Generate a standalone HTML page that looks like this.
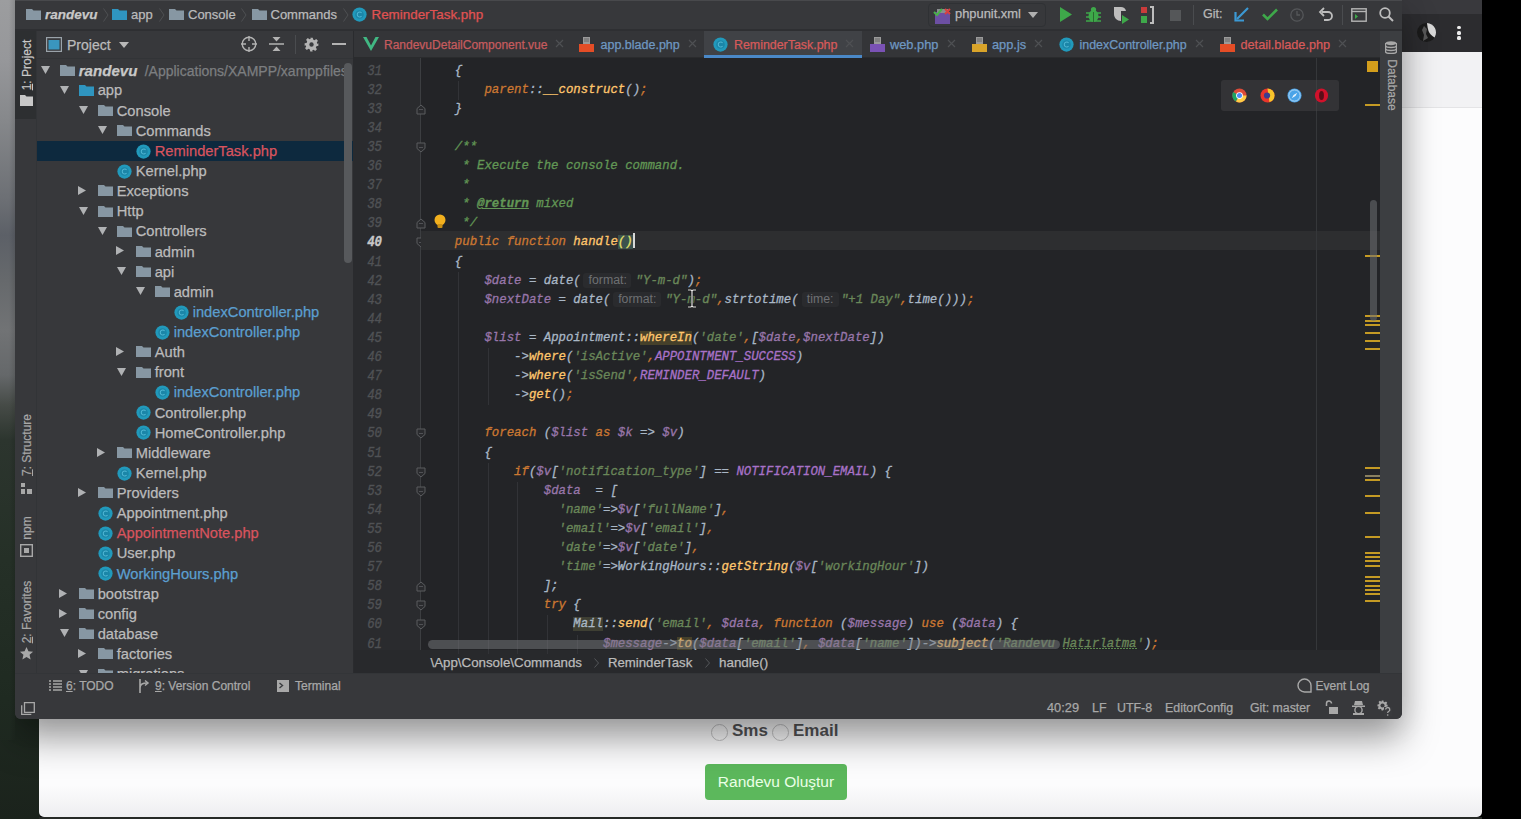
<!DOCTYPE html><html><head><meta charset="utf-8"><style>
*{margin:0;padding:0;box-sizing:border-box}
html,body{width:1521px;height:819px;overflow:hidden;background:#000;font-family:"Liberation Sans",sans-serif}
.a{position:absolute}
.ui{font-family:"Liberation Sans",sans-serif;white-space:pre;line-height:1;-webkit-text-stroke:0.25px currentColor}
.code{font-family:"Liberation Mono",monospace;font-style:italic;font-size:12.35px;white-space:pre;line-height:19.05px;color:#a9b7c6;-webkit-text-stroke:0.3px currentColor}
.kw{color:#cc7832}.fn{color:#ffc66d}.v{color:#9876aa}.cn{color:#a872c8}.s{color:#6a8759}.c{color:#629755}.t{color:#a9b7c6}
.k{color:#cc7832}
.hint{display:inline-block;box-sizing:border-box;font-family:"Liberation Sans",sans-serif;font-style:normal;font-size:12.3px;line-height:15px;color:#6e7073;background:#2a2b2e;border-radius:3px;vertical-align:0px;-webkit-text-stroke:0}
</style></head><body>
<div class="a" style="left:0;top:0;width:40px;height:819px;background:linear-gradient(180deg,#9c9d9f 0px,#96979a 60px,#86888b 120px,#6c6f74 200px,#5c6067 235px,#66696c 280px,#717375 330px,#65686a 375px,#464b47 405px,#2c352e 440px,#253027 560px,#1f2a21 700px,#1b231c 819px)"></div>
<div class="a" style="left:1482px;top:0;width:39px;height:819px;background:#000"></div>
<div class="a" style="left:39px;top:0;width:1443px;height:817px;background:linear-gradient(180deg,#fcfcfd 0,#fcfcfd 785px,#eeeef0 817px);border-radius:0 0 5px 5px"></div>
<div class="a" style="left:39px;top:0;width:1443px;height:14px;background:#39393d"></div>
<div class="a" style="left:39px;top:14px;width:1443px;height:38px;background:#2c2c2f"></div>
<div class="a" style="left:39px;top:52px;width:1443px;height:55px;background:#f2f2f4"></div>
<div class="a" style="left:39px;top:107px;width:1443px;height:1px;background:#e4e4e6"></div>
<svg class="a" style="left:1416.5px;top:23px" width="19" height="19" viewBox="0 0 19 19"><circle cx="9.5" cy="9.5" r="9.5" fill="#1b1b1b"/><path d="M10 0.05A9.5 9.5 0 0 1 17.6 14.5C15 13 12.5 11 11.5 8 10.8 5.5 10.3 3 10 0.05z" fill="#d8d8d8"/><path d="M7 3l3 3-1 5 2 4-5 3 1-6-2-5z" fill="#8a8a8a" opacity=".55"/></svg>
<div class="a" style="left:1457px;top:25.8px;width:3.6px;height:3.6px;border-radius:1.5px;background:#ececec"></div>
<div class="a" style="left:1457px;top:31.1px;width:3.6px;height:3.6px;border-radius:1.5px;background:#ececec"></div>
<div class="a" style="left:1457px;top:36.4px;width:3.6px;height:3.6px;border-radius:1.5px;background:#ececec"></div>
<div class="a" style="left:711px;top:724px;width:17px;height:17px;border-radius:50%;border:1.5px solid #c4c4c6"></div>
<div class="a ui" style="left:732px;top:722px;font-size:17px;font-weight:bold;color:#555557;-webkit-text-stroke:0">Sms</div>
<div class="a" style="left:772px;top:724px;width:17px;height:17px;border-radius:50%;border:1.5px solid #c4c4c6"></div>
<div class="a ui" style="left:793px;top:722px;font-size:17px;font-weight:bold;color:#555557;-webkit-text-stroke:0">Email</div>
<div class="a" style="left:705px;top:764px;width:142px;height:36px;border-radius:4px;background:#5cb85c"></div>
<div class="a ui" style="left:705px;top:774px;width:142px;text-align:center;font-size:15.5px;color:#eaffe6;-webkit-text-stroke:0">Randevu Oluştur</div>
<div class="a" style="left:39px;top:817px;width:1443px;height:2px;background:#262a26"></div>
<div class="a" style="left:15px;top:0;width:1387px;height:719px;background:#3a3c3f;border-radius:0 0 6px 6px;overflow:hidden;box-shadow:0 20px 36px rgba(0,0,0,.36),0 4px 30px rgba(0,0,0,.1)" id="ide">
</div>
<div class="a" style="left:0;top:0;width:15px;height:740px;background:linear-gradient(180deg,#9c9d9f 0px,#96979a 60px,#86888b 120px,#6c6f74 200px,#5c6067 235px,#66696c 280px,#717375 330px,#65686a 375px,#464b47 405px,#2c352e 440px,#253027 560px,#1f2a21 700px,#1b231c 819px)"></div>
<div class="a" style="left:9px;top:0;width:6px;height:740px;background:linear-gradient(90deg,rgba(0,0,0,0),rgba(0,0,0,.12))"></div>
<div class="a" style="left:15px;top:0;width:1387px;height:30px;background:#37383b"></div>
<div class="a" style="left:15px;top:0;width:1387px;height:1px;background:#48494c"></div>
<div class="a" style="left:15px;top:29px;width:1387px;height:2px;background:#2e2f32"></div>
<div class="a" style="left:15px;top:31px;width:22px;height:688px;background:#37383b;border-radius:0 0 0 6px"></div>
<div class="a" style="left:15px;top:31px;width:22px;height:88px;background:#2d2f31"></div>
<div class="a" style="left:37px;top:31px;width:317px;height:642px;background:#37383b"></div>
<div class="a" style="left:37px;top:58px;width:317px;height:1px;background:#323437"></div>
<div class="a" style="left:353px;top:31px;width:1px;height:642px;background:#2a2b2e"></div>
<div class="a" style="left:354px;top:31px;width:1026px;height:27px;background:#343538"></div>
<div class="a" style="left:354px;top:57px;width:1026px;height:1px;background:#2a2b2d"></div>
<div class="a" style="left:354px;top:58px;width:67px;height:592px;background:#2a2b2e"></div>
<div class="a" style="left:421px;top:58px;width:959px;height:592px;background:#232427"></div>
<div class="a" style="left:354px;top:650px;width:1026px;height:24px;background:#28292c"></div>
<div class="a" style="left:1380px;top:31px;width:22px;height:642px;background:#3c3e41"></div>
<div class="a" style="left:37px;top:673px;width:1365px;height:46px;background:#37383b;border-radius:0 0 6px 0"></div>
<svg class="a" style="left:26px;top:8px" width="15" height="12" viewBox="0 0 15 12"><path d="M0 1h6l1.5 1.6H15V12H0z" fill="#8797a3"/></svg>
<div class="a ui" style="left:45px;top:8px;font-size:13.5px;color:#c8c8c8;font-weight:bold;font-style:italic">randevu</div>
<svg class="a" style="left:103px;top:8px" width="6" height="14" viewBox="0 0 6 14"><path d="M0.5 0.5L5 7 0.5 13.5" stroke="#4e5053" stroke-width="1" fill="none"/></svg>
<svg class="a" style="left:112px;top:8px" width="15" height="12" viewBox="0 0 15 12"><path d="M0 1h6l1.5 1.6H15V12H0z" fill="#2f95c0"/></svg>
<div class="a ui" style="left:131px;top:8px;font-size:13px;color:#bbbbbb;">app</div>
<svg class="a" style="left:159px;top:8px" width="6" height="14" viewBox="0 0 6 14"><path d="M0.5 0.5L5 7 0.5 13.5" stroke="#4e5053" stroke-width="1" fill="none"/></svg>
<svg class="a" style="left:169px;top:8px" width="15" height="12" viewBox="0 0 15 12"><path d="M0 1h6l1.5 1.6H15V12H0z" fill="#8797a3"/></svg>
<div class="a ui" style="left:188px;top:8px;font-size:13px;color:#bbbbbb;">Console</div>
<svg class="a" style="left:241px;top:8px" width="6" height="14" viewBox="0 0 6 14"><path d="M0.5 0.5L5 7 0.5 13.5" stroke="#4e5053" stroke-width="1" fill="none"/></svg>
<svg class="a" style="left:252px;top:8px" width="15" height="12" viewBox="0 0 15 12"><path d="M0 1h6l1.5 1.6H15V12H0z" fill="#8797a3"/></svg>
<div class="a ui" style="left:270.5px;top:8px;font-size:13px;color:#bbbbbb;">Commands</div>
<svg class="a" style="left:343px;top:8px" width="6" height="14" viewBox="0 0 6 14"><path d="M0.5 0.5L5 7 0.5 13.5" stroke="#4e5053" stroke-width="1" fill="none"/></svg>
<svg class="a" style="left:352px;top:7px" width="15" height="15" viewBox="0 0 16 16"><circle cx="8" cy="8" r="7.6" fill="#2199bb"/><circle cx="8" cy="8" r="4.6" fill="#1b86a8"/><path d="M10.2 6.3A2.6 2.6 0 1 0 10.2 9.7" stroke="#4fb6d3" stroke-width="1.1" fill="none"/></svg>
<div class="a ui" style="left:371.5px;top:8px;font-size:13.4px;color:#e05252;">ReminderTask.php</div>
<div class="a ui" style="left:26.5px;top:64.5px;font-size:12px;color:#c8c8c8;transform:translate(-50%,-50%) rotate(-90deg);-webkit-text-stroke:0.2px #c8c8c8"><u>1</u>: Project</div>
<svg class="a" style="left:20px;top:95px" width="13" height="11" viewBox="0 0 13 11"><path d="M0 0h5l1.5 1.5H13V11H0z" fill="#c8c8c8"/></svg>
<div class="a ui" style="left:27px;top:445px;font-size:12px;color:#a8a8a8;transform:translate(-50%,-50%) rotate(-90deg);-webkit-text-stroke:0.2px #a8a8a8"><u>7</u>: Structure</div>
<svg class="a" style="left:21px;top:483px" width="11" height="11" viewBox="0 0 11 11"><rect x="0" y="0" width="4" height="4" fill="#a8a8a8"/><rect x="0" y="6" width="4" height="5" fill="#a8a8a8"/><rect x="6" y="6" width="5" height="5" fill="#a8a8a8"/></svg>
<div class="a ui" style="left:27px;top:527.5px;font-size:12px;color:#a8a8a8;transform:translate(-50%,-50%) rotate(-90deg);-webkit-text-stroke:0.2px #a8a8a8">npm</div>
<svg class="a" style="left:20px;top:544px" width="13" height="13" viewBox="0 0 13 13"><rect x="0.7" y="0.7" width="11.6" height="11.6" fill="none" stroke="#a8a8a8" stroke-width="1.4"/><rect x="4" y="4" width="5" height="5" fill="#a8a8a8"/></svg>
<div class="a ui" style="left:27px;top:612px;font-size:12px;color:#a8a8a8;transform:translate(-50%,-50%) rotate(-90deg);-webkit-text-stroke:0.2px #a8a8a8"><u>2</u>: Favorites</div>
<svg class="a" style="left:19px;top:646px" width="15" height="15" viewBox="0 0 24 24"><path d="M12 1.5l3.1 7 7.4.7-5.6 4.9 1.7 7.4L12 17.6 5.4 21.5l1.7-7.4L1.5 9.2l7.4-.7z" fill="#a8a8a8"/></svg>
<div class="a" style="left:36px;top:31px;width:1px;height:642px;background:#323437"></div>
<div class="a" style="left:15px;top:673px;width:1387px;height:1px;background:#333538"></div>
<svg class="a" style="left:21px;top:702px" width="14" height="13" viewBox="0 0 14 13"><path d="M3.5 0.7h9.8v9.6H3.5z M0.7 3.2v9.1h9.6" fill="none" stroke="#a8a8a8" stroke-width="1.3"/></svg>
<svg class="a" style="left:46px;top:37px" width="16" height="15" viewBox="0 0 16 15"><rect x="0.6" y="0.6" width="14.8" height="13.8" fill="none" stroke="#9aa3aa" stroke-width="1.2"/><rect x="2.5" y="3" width="11" height="9.5" fill="#3a96bf"/></svg>
<div class="a ui" style="left:67px;top:38px;font-size:14px;color:#bbbbbb;">Project</div>
<svg class="a" style="left:119px;top:42px" width="10" height="6" viewBox="0 0 10 6"><path d="M0 0h10L5 6z" fill="#b8b8b8"/></svg>
<svg class="a" style="left:241px;top:36px" width="16" height="16" viewBox="0 0 16 16"><circle cx="8" cy="8" r="6.8" fill="none" stroke="#b3b3b3" stroke-width="1.4"/><path d="M8 0v5M8 11v5M0 8h5M11 8h5" stroke="#b3b3b3" stroke-width="1.4"/></svg>
<svg class="a" style="left:269px;top:36px" width="15" height="16" viewBox="0 0 15 16"><path d="M0 8h15" stroke="#b3b3b3" stroke-width="1.5"/><path d="M3.5 1h8L7.5 5.5zM3.5 15h8L7.5 10.5z" fill="#b3b3b3"/></svg>
<div class="a" style="left:295px;top:35px;width:1px;height:19px;background:#4a4c4f"></div>
<svg class="a" style="left:304px;top:37px" width="15" height="15" viewBox="0 0 24 24"><path d="M10 1h4l.6 3.1 2.3 1 2.6-1.8 2.8 2.8-1.8 2.6 1 2.3L23 10v4l-3.1.6-1 2.3 1.8 2.6-2.8 2.8-2.6-1.8-2.3 1L14 23h-4l-.6-3.1-2.3-1-2.6 1.8-2.8-2.8 1.8-2.6-1-2.3L1 14v-4l3.1-.6 1-2.3L3.3 4.5l2.8-2.8 2.6 1.8 2.3-1z" fill="#b3b3b3"/><circle cx="12" cy="12" r="3.5" fill="#3a3c3f"/></svg>
<div class="a" style="left:332px;top:43px;width:14px;height:2px;background:#b3b3b3"></div>
<div class="a" style="left:37px;top:59px;width:316px;height:614px;overflow:hidden">
<div class="a" style="left:-37px;top:-59px;width:400px;height:800px">
<div class="a" style="left:37px;top:141px;width:316px;height:20px;background:#0d293e"></div>
<svg class="a" style="left:41.2px;top:65.6px" width="9" height="8" viewBox="0 0 9 8"><path d="M0 0h9L4.5 8z" fill="#b0b2b4"/></svg>
<svg class="a" style="left:59.7px;top:63.6px" width="15" height="12" viewBox="0 0 15 12"><path d="M0 1h6l1.5 1.6H15V12H0z" fill="#8797a3"/></svg>
<div class="a ui" style="left:78.7px;top:63.1px;font-size:15.1px;color:#c8c8c8;font-weight:bold;font-style:italic">randevu</div>
<div class="a ui" style="left:144.7px;top:63.6px;font-size:14px;color:#7c7e80;">/Applications/XAMPP/xamppfiles</div>
<svg class="a" style="left:60.2px;top:85.7px" width="9" height="8" viewBox="0 0 9 8"><path d="M0 0h9L4.5 8z" fill="#b0b2b4"/></svg>
<svg class="a" style="left:78.7px;top:83.7px" width="15" height="12" viewBox="0 0 15 12"><path d="M0 1h6l1.5 1.6H15V12H0z" fill="#2f95c0"/></svg>
<div class="a ui" style="left:97.7px;top:83.4px;font-size:14.7px;color:#bbbbbb;">app</div>
<svg class="a" style="left:79.2px;top:105.9px" width="9" height="8" viewBox="0 0 9 8"><path d="M0 0h9L4.5 8z" fill="#b0b2b4"/></svg>
<svg class="a" style="left:97.7px;top:103.9px" width="15" height="12" viewBox="0 0 15 12"><path d="M0 1h6l1.5 1.6H15V12H0z" fill="#8797a3"/></svg>
<div class="a ui" style="left:116.7px;top:103.6px;font-size:14.7px;color:#bbbbbb;">Console</div>
<svg class="a" style="left:98.2px;top:126.0px" width="9" height="8" viewBox="0 0 9 8"><path d="M0 0h9L4.5 8z" fill="#b0b2b4"/></svg>
<svg class="a" style="left:116.7px;top:124.0px" width="15" height="12" viewBox="0 0 15 12"><path d="M0 1h6l1.5 1.6H15V12H0z" fill="#8797a3"/></svg>
<div class="a ui" style="left:135.7px;top:123.7px;font-size:14.7px;color:#bbbbbb;">Commands</div>
<svg class="a" style="left:135.7px;top:143.6px" width="15" height="15" viewBox="0 0 16 16"><circle cx="8" cy="8" r="7.6" fill="#2199bb"/><circle cx="8" cy="8" r="4.6" fill="#1b86a8"/><path d="M10.2 6.3A2.6 2.6 0 1 0 10.2 9.7" stroke="#4fb6d3" stroke-width="1.1" fill="none"/></svg>
<div class="a ui" style="left:154.7px;top:143.8px;font-size:14.7px;color:#d8545e;">ReminderTask.php</div>
<svg class="a" style="left:116.7px;top:163.8px" width="15" height="15" viewBox="0 0 16 16"><circle cx="8" cy="8" r="7.6" fill="#2199bb"/><circle cx="8" cy="8" r="4.6" fill="#1b86a8"/><path d="M10.2 6.3A2.6 2.6 0 1 0 10.2 9.7" stroke="#4fb6d3" stroke-width="1.1" fill="none"/></svg>
<div class="a ui" style="left:135.7px;top:163.9px;font-size:14.7px;color:#bbbbbb;">Kernel.php</div>
<svg class="a" style="left:78.2px;top:185.9px" width="8" height="9" viewBox="0 0 8 9"><path d="M0 0v9l8-4.5z" fill="#b0b2b4"/></svg>
<svg class="a" style="left:97.7px;top:184.4px" width="15" height="12" viewBox="0 0 15 12"><path d="M0 1h6l1.5 1.6H15V12H0z" fill="#8797a3"/></svg>
<div class="a ui" style="left:116.7px;top:184.1px;font-size:14.7px;color:#bbbbbb;">Exceptions</div>
<svg class="a" style="left:79.2px;top:206.5px" width="9" height="8" viewBox="0 0 9 8"><path d="M0 0h9L4.5 8z" fill="#b0b2b4"/></svg>
<svg class="a" style="left:97.7px;top:204.5px" width="15" height="12" viewBox="0 0 15 12"><path d="M0 1h6l1.5 1.6H15V12H0z" fill="#8797a3"/></svg>
<div class="a ui" style="left:116.7px;top:204.2px;font-size:14.7px;color:#bbbbbb;">Http</div>
<svg class="a" style="left:98.2px;top:226.6px" width="9" height="8" viewBox="0 0 9 8"><path d="M0 0h9L4.5 8z" fill="#b0b2b4"/></svg>
<svg class="a" style="left:116.7px;top:224.6px" width="15" height="12" viewBox="0 0 15 12"><path d="M0 1h6l1.5 1.6H15V12H0z" fill="#8797a3"/></svg>
<div class="a ui" style="left:135.7px;top:224.3px;font-size:14.7px;color:#bbbbbb;">Controllers</div>
<svg class="a" style="left:116.2px;top:246.3px" width="8" height="9" viewBox="0 0 8 9"><path d="M0 0v9l8-4.5z" fill="#b0b2b4"/></svg>
<svg class="a" style="left:135.7px;top:244.8px" width="15" height="12" viewBox="0 0 15 12"><path d="M0 1h6l1.5 1.6H15V12H0z" fill="#8797a3"/></svg>
<div class="a ui" style="left:154.7px;top:244.5px;font-size:14.7px;color:#bbbbbb;">admin</div>
<svg class="a" style="left:117.2px;top:266.9px" width="9" height="8" viewBox="0 0 9 8"><path d="M0 0h9L4.5 8z" fill="#b0b2b4"/></svg>
<svg class="a" style="left:135.7px;top:264.9px" width="15" height="12" viewBox="0 0 15 12"><path d="M0 1h6l1.5 1.6H15V12H0z" fill="#8797a3"/></svg>
<div class="a ui" style="left:154.7px;top:264.6px;font-size:14.7px;color:#bbbbbb;">api</div>
<svg class="a" style="left:136.2px;top:287.0px" width="9" height="8" viewBox="0 0 9 8"><path d="M0 0h9L4.5 8z" fill="#b0b2b4"/></svg>
<svg class="a" style="left:154.7px;top:285.0px" width="15" height="12" viewBox="0 0 15 12"><path d="M0 1h6l1.5 1.6H15V12H0z" fill="#8797a3"/></svg>
<div class="a ui" style="left:173.7px;top:284.7px;font-size:14.7px;color:#bbbbbb;">admin</div>
<svg class="a" style="left:173.7px;top:304.7px" width="15" height="15" viewBox="0 0 16 16"><circle cx="8" cy="8" r="7.6" fill="#2199bb"/><circle cx="8" cy="8" r="4.6" fill="#1b86a8"/><path d="M10.2 6.3A2.6 2.6 0 1 0 10.2 9.7" stroke="#4fb6d3" stroke-width="1.1" fill="none"/></svg>
<div class="a ui" style="left:192.7px;top:304.9px;font-size:14.7px;color:#5b9fd0;">indexController.php</div>
<svg class="a" style="left:154.7px;top:324.8px" width="15" height="15" viewBox="0 0 16 16"><circle cx="8" cy="8" r="7.6" fill="#2199bb"/><circle cx="8" cy="8" r="4.6" fill="#1b86a8"/><path d="M10.2 6.3A2.6 2.6 0 1 0 10.2 9.7" stroke="#4fb6d3" stroke-width="1.1" fill="none"/></svg>
<div class="a ui" style="left:173.7px;top:325.0px;font-size:14.7px;color:#5b9fd0;">indexController.php</div>
<svg class="a" style="left:116.2px;top:346.9px" width="8" height="9" viewBox="0 0 8 9"><path d="M0 0v9l8-4.5z" fill="#b0b2b4"/></svg>
<svg class="a" style="left:135.7px;top:345.4px" width="15" height="12" viewBox="0 0 15 12"><path d="M0 1h6l1.5 1.6H15V12H0z" fill="#8797a3"/></svg>
<div class="a ui" style="left:154.7px;top:345.1px;font-size:14.7px;color:#bbbbbb;">Auth</div>
<svg class="a" style="left:117.2px;top:367.5px" width="9" height="8" viewBox="0 0 9 8"><path d="M0 0h9L4.5 8z" fill="#b0b2b4"/></svg>
<svg class="a" style="left:135.7px;top:365.5px" width="15" height="12" viewBox="0 0 15 12"><path d="M0 1h6l1.5 1.6H15V12H0z" fill="#8797a3"/></svg>
<div class="a ui" style="left:154.7px;top:365.2px;font-size:14.7px;color:#bbbbbb;">front</div>
<svg class="a" style="left:154.7px;top:385.2px" width="15" height="15" viewBox="0 0 16 16"><circle cx="8" cy="8" r="7.6" fill="#2199bb"/><circle cx="8" cy="8" r="4.6" fill="#1b86a8"/><path d="M10.2 6.3A2.6 2.6 0 1 0 10.2 9.7" stroke="#4fb6d3" stroke-width="1.1" fill="none"/></svg>
<div class="a ui" style="left:173.7px;top:385.4px;font-size:14.7px;color:#5b9fd0;">indexController.php</div>
<svg class="a" style="left:135.7px;top:405.3px" width="15" height="15" viewBox="0 0 16 16"><circle cx="8" cy="8" r="7.6" fill="#2199bb"/><circle cx="8" cy="8" r="4.6" fill="#1b86a8"/><path d="M10.2 6.3A2.6 2.6 0 1 0 10.2 9.7" stroke="#4fb6d3" stroke-width="1.1" fill="none"/></svg>
<div class="a ui" style="left:154.7px;top:405.5px;font-size:14.7px;color:#bbbbbb;">Controller.php</div>
<svg class="a" style="left:135.7px;top:425.4px" width="15" height="15" viewBox="0 0 16 16"><circle cx="8" cy="8" r="7.6" fill="#2199bb"/><circle cx="8" cy="8" r="4.6" fill="#1b86a8"/><path d="M10.2 6.3A2.6 2.6 0 1 0 10.2 9.7" stroke="#4fb6d3" stroke-width="1.1" fill="none"/></svg>
<div class="a ui" style="left:154.7px;top:425.6px;font-size:14.7px;color:#bbbbbb;">HomeController.php</div>
<svg class="a" style="left:97.2px;top:447.6px" width="8" height="9" viewBox="0 0 8 9"><path d="M0 0v9l8-4.5z" fill="#b0b2b4"/></svg>
<svg class="a" style="left:116.7px;top:446.1px" width="15" height="12" viewBox="0 0 15 12"><path d="M0 1h6l1.5 1.6H15V12H0z" fill="#8797a3"/></svg>
<div class="a ui" style="left:135.7px;top:445.8px;font-size:14.7px;color:#bbbbbb;">Middleware</div>
<svg class="a" style="left:116.7px;top:465.7px" width="15" height="15" viewBox="0 0 16 16"><circle cx="8" cy="8" r="7.6" fill="#2199bb"/><circle cx="8" cy="8" r="4.6" fill="#1b86a8"/><path d="M10.2 6.3A2.6 2.6 0 1 0 10.2 9.7" stroke="#4fb6d3" stroke-width="1.1" fill="none"/></svg>
<div class="a ui" style="left:135.7px;top:465.9px;font-size:14.7px;color:#bbbbbb;">Kernel.php</div>
<svg class="a" style="left:78.2px;top:487.8px" width="8" height="9" viewBox="0 0 8 9"><path d="M0 0v9l8-4.5z" fill="#b0b2b4"/></svg>
<svg class="a" style="left:97.7px;top:486.3px" width="15" height="12" viewBox="0 0 15 12"><path d="M0 1h6l1.5 1.6H15V12H0z" fill="#8797a3"/></svg>
<div class="a ui" style="left:116.7px;top:486.0px;font-size:14.7px;color:#bbbbbb;">Providers</div>
<svg class="a" style="left:97.7px;top:506.0px" width="15" height="15" viewBox="0 0 16 16"><circle cx="8" cy="8" r="7.6" fill="#2199bb"/><circle cx="8" cy="8" r="4.6" fill="#1b86a8"/><path d="M10.2 6.3A2.6 2.6 0 1 0 10.2 9.7" stroke="#4fb6d3" stroke-width="1.1" fill="none"/></svg>
<div class="a ui" style="left:116.7px;top:506.2px;font-size:14.7px;color:#bbbbbb;">Appointment.php</div>
<svg class="a" style="left:97.7px;top:526.1px" width="15" height="15" viewBox="0 0 16 16"><circle cx="8" cy="8" r="7.6" fill="#2199bb"/><circle cx="8" cy="8" r="4.6" fill="#1b86a8"/><path d="M10.2 6.3A2.6 2.6 0 1 0 10.2 9.7" stroke="#4fb6d3" stroke-width="1.1" fill="none"/></svg>
<div class="a ui" style="left:116.7px;top:526.3px;font-size:14.7px;color:#d8545e;">AppointmentNote.php</div>
<svg class="a" style="left:97.7px;top:546.2px" width="15" height="15" viewBox="0 0 16 16"><circle cx="8" cy="8" r="7.6" fill="#2199bb"/><circle cx="8" cy="8" r="4.6" fill="#1b86a8"/><path d="M10.2 6.3A2.6 2.6 0 1 0 10.2 9.7" stroke="#4fb6d3" stroke-width="1.1" fill="none"/></svg>
<div class="a ui" style="left:116.7px;top:546.4px;font-size:14.7px;color:#bbbbbb;">User.php</div>
<svg class="a" style="left:97.7px;top:566.4px" width="15" height="15" viewBox="0 0 16 16"><circle cx="8" cy="8" r="7.6" fill="#2199bb"/><circle cx="8" cy="8" r="4.6" fill="#1b86a8"/><path d="M10.2 6.3A2.6 2.6 0 1 0 10.2 9.7" stroke="#4fb6d3" stroke-width="1.1" fill="none"/></svg>
<div class="a ui" style="left:116.7px;top:566.6px;font-size:14.7px;color:#5b9fd0;">WorkingHours.php</div>
<svg class="a" style="left:59.2px;top:588.5px" width="8" height="9" viewBox="0 0 8 9"><path d="M0 0v9l8-4.5z" fill="#b0b2b4"/></svg>
<svg class="a" style="left:78.7px;top:587.0px" width="15" height="12" viewBox="0 0 15 12"><path d="M0 1h6l1.5 1.6H15V12H0z" fill="#8797a3"/></svg>
<div class="a ui" style="left:97.7px;top:586.7px;font-size:14.7px;color:#bbbbbb;">bootstrap</div>
<svg class="a" style="left:59.2px;top:608.6px" width="8" height="9" viewBox="0 0 8 9"><path d="M0 0v9l8-4.5z" fill="#b0b2b4"/></svg>
<svg class="a" style="left:78.7px;top:607.1px" width="15" height="12" viewBox="0 0 15 12"><path d="M0 1h6l1.5 1.6H15V12H0z" fill="#8797a3"/></svg>
<div class="a ui" style="left:97.7px;top:606.8px;font-size:14.7px;color:#bbbbbb;">config</div>
<svg class="a" style="left:60.2px;top:629.2px" width="9" height="8" viewBox="0 0 9 8"><path d="M0 0h9L4.5 8z" fill="#b0b2b4"/></svg>
<svg class="a" style="left:78.7px;top:627.2px" width="15" height="12" viewBox="0 0 15 12"><path d="M0 1h6l1.5 1.6H15V12H0z" fill="#8797a3"/></svg>
<div class="a ui" style="left:97.7px;top:626.9px;font-size:14.7px;color:#bbbbbb;">database</div>
<svg class="a" style="left:78.2px;top:648.9px" width="8" height="9" viewBox="0 0 8 9"><path d="M0 0v9l8-4.5z" fill="#b0b2b4"/></svg>
<svg class="a" style="left:97.7px;top:647.4px" width="15" height="12" viewBox="0 0 15 12"><path d="M0 1h6l1.5 1.6H15V12H0z" fill="#8797a3"/></svg>
<div class="a ui" style="left:116.7px;top:647.1px;font-size:14.7px;color:#bbbbbb;">factories</div>
<svg class="a" style="left:79.2px;top:669.5px" width="9" height="8" viewBox="0 0 9 8"><path d="M0 0h9L4.5 8z" fill="#b0b2b4"/></svg>
<svg class="a" style="left:97.7px;top:667.5px" width="15" height="12" viewBox="0 0 15 12"><path d="M0 1h6l1.5 1.6H15V12H0z" fill="#8797a3"/></svg>
<div class="a ui" style="left:116.7px;top:667.2px;font-size:14.7px;color:#bbbbbb;">migrations</div>
</div></div>
<div class="a" style="left:344px;top:63px;width:8px;height:200px;border-radius:4px;background:#57595c"></div>
<div class="a" style="left:928px;top:3px;width:118px;height:24px;border:1px solid #2f3134;border-radius:4px"></div>
<svg class="a" style="left:933px;top:6px" width="19" height="18" viewBox="0 0 19 18"><rect x="2" y="6" width="15" height="12" fill="#6c4fa3"/><rect x="4" y="3" width="11" height="4" fill="#8a8d90"/><path d="M1 6l3 3 5-6" stroke="#49b049" stroke-width="2" fill="none"/><path d="M12 3l5 5M17 3l-5 5" stroke="#d84040" stroke-width="2"/></svg>
<div class="a ui" style="left:955px;top:8px;font-size:12.9px;color:#bbbbbb;">phpunit.xml</div>
<svg class="a" style="left:1028px;top:12px" width="10" height="6" viewBox="0 0 10 6"><path d="M0 0h10L5 6z" fill="#b0b0b0"/></svg>
<svg class="a" style="left:1060px;top:7px" width="12" height="15" viewBox="0 0 12 15"><path d="M0 0v15l12-7.5z" fill="#3ea84a"/></svg>
<svg class="a" style="left:1086px;top:6px" width="15" height="17" viewBox="0 0 15 17"><ellipse cx="7.5" cy="10" rx="5" ry="6" fill="#3ea84a"/><circle cx="7.5" cy="3.5" r="2.6" fill="#3ea84a"/><path d="M0 7h15M0 11h15M0 15h15" stroke="#3ea84a" stroke-width="1.4"/><path d="M7.5 6v10" stroke="#2b6a30" stroke-width="1"/></svg>
<svg class="a" style="left:1112px;top:6px" width="18" height="18" viewBox="0 0 18 18"><path d="M2 1h7v14c-4 0-7-3-7-7z" fill="#bdbdbd"/><path d="M9 1c2.5 0 4.5 1.5 5 4h-5z" fill="#bdbdbd"/><path d="M10 9v9l7-4.5z" fill="#3ea84a"/></svg>
<svg class="a" style="left:1140px;top:6px" width="16" height="18" viewBox="0 0 16 18"><rect x="1" y="1" width="6" height="6" fill="#c93b3b"/><rect x="1" y="10" width="6" height="7" fill="#3ea84a"/><path d="M10 1h3v16h-3" stroke="#bdbdbd" stroke-width="2" fill="none"/></svg>
<div class="a" style="left:1170px;top:10px;width:11px;height:11px;background:#555759"></div>
<div class="a" style="left:1193px;top:5px;width:1px;height:20px;background:#4a4c4f"></div>
<div class="a ui" style="left:1203px;top:8px;font-size:12.5px;color:#b8b8b8;">Git:</div>
<svg class="a" style="left:1234px;top:7px" width="15" height="15" viewBox="0 0 15 15"><path d="M14 1L3 12" stroke="#3c99d4" stroke-width="2.2"/><path d="M1.5 5v8.5h8.5" stroke="#3c99d4" stroke-width="2.2" fill="none"/></svg>
<svg class="a" style="left:1262px;top:8px" width="16" height="13" viewBox="0 0 16 13"><path d="M1 6.5l4.5 4.5L15 1.5" stroke="#3ea84a" stroke-width="2.6" fill="none"/></svg>
<svg class="a" style="left:1290px;top:8px" width="14" height="14" viewBox="0 0 14 14"><circle cx="7" cy="7" r="6.2" fill="none" stroke="#55575a" stroke-width="1.3"/><path d="M7 3v4h3" stroke="#55575a" stroke-width="1.3" fill="none"/></svg>
<svg class="a" style="left:1318px;top:7px" width="15" height="15" viewBox="0 0 15 15"><path d="M4 5h6a4 4 0 0 1 0 8H6" stroke="#bdbdbd" stroke-width="1.8" fill="none"/><path d="M6 1L2 5l4 4" stroke="#bdbdbd" stroke-width="1.8" fill="none"/></svg>
<div class="a" style="left:1342px;top:5px;width:1px;height:20px;background:#4a4c4f"></div>
<svg class="a" style="left:1351px;top:8px" width="16" height="14" viewBox="0 0 16 14"><rect x="0.8" y="0.8" width="14.4" height="12.4" fill="none" stroke="#b5b5b5" stroke-width="1.4"/><path d="M1 3.5h14" stroke="#b5b5b5" stroke-width="1.4"/><path d="M4 6l3 2.5L4 11z" fill="#3ea84a"/></svg>
<svg class="a" style="left:1379px;top:7px" width="15" height="15" viewBox="0 0 15 15"><circle cx="6" cy="6" r="4.8" fill="none" stroke="#bdbdbd" stroke-width="1.8"/><path d="M9.5 9.5L14 14" stroke="#bdbdbd" stroke-width="2"/></svg>
<svg class="a" style="left:1385px;top:41px" width="12" height="13" viewBox="0 0 12 13"><ellipse cx="6" cy="2.2" rx="5.5" ry="2" fill="#a8a8a8"/><path d="M0.5 4.5c0 2.6 11 2.6 11 0M0.5 7.5c0 2.6 11 2.6 11 0M0.5 10.5c0 2.6 11 2.6 11 0" stroke="#a8a8a8" stroke-width="1.5" fill="none"/><path d="M0.5 2v9M11.5 2v9" stroke="#a8a8a8" stroke-width="1.2"/></svg>
<div class="a ui" style="left:1391.5px;top:85px;font-size:12px;color:#a8a8a8;transform:translate(-50%,-50%) rotate(90deg);-webkit-text-stroke:0.2px #a8a8a8">Database</div>
<div class="a" style="left:704px;top:31px;width:158px;height:27px;background:#404246"></div>
<div class="a" style="left:704px;top:55px;width:158px;height:3px;background:#4a88c7"></div>
<svg class="a" style="left:363px;top:37px" width="16" height="14" viewBox="0 0 16 14"><path d="M0 0h3.5L8 8.5 12.5 0H16L8 14z" fill="#41b883"/></svg>
<div class="a ui" style="left:384px;top:38.5px;font-size:12px;color:#c65b5e;">RandevuDetailComponent.vue</div>
<svg class="a" style="left:555px;top:39px" width="9" height="9" viewBox="0 0 9 9"><path d="M1 1l7 7M8 1L1 8" stroke="#4e5053" stroke-width="1.2"/></svg>
<svg class="a" style="left:578px;top:36px" width="17" height="17" viewBox="0 0 17 17"><rect x="5" y="1" width="7" height="7" fill="#9a9a9a"/><path d="M6 3h5M6 5h5" stroke="#5a5a5a" stroke-width=".8"/><rect x="1" y="8" width="15" height="8" fill="#e44d26"/></svg>
<div class="a ui" style="left:600.5px;top:38.7px;font-size:12.5px;color:#6f98c2;">app.blade.php</div>
<svg class="a" style="left:688px;top:39px" width="9" height="9" viewBox="0 0 9 9"><path d="M1 1l7 7M8 1L1 8" stroke="#4e5053" stroke-width="1.2"/></svg>
<svg class="a" style="left:713px;top:37px" width="15" height="15" viewBox="0 0 16 16"><circle cx="8" cy="8" r="7.6" fill="#2199bb"/><circle cx="8" cy="8" r="4.6" fill="#1b86a8"/><path d="M10.2 6.3A2.6 2.6 0 1 0 10.2 9.7" stroke="#4fb6d3" stroke-width="1.1" fill="none"/></svg>
<div class="a ui" style="left:734px;top:38.7px;font-size:12.4px;color:#d75a5a;">ReminderTask.php</div>
<svg class="a" style="left:845px;top:39px" width="9" height="9" viewBox="0 0 9 9"><path d="M1 1l7 7M8 1L1 8" stroke="#4e5053" stroke-width="1.2"/></svg>
<svg class="a" style="left:869px;top:36px" width="17" height="17" viewBox="0 0 17 17"><rect x="5" y="1" width="7" height="7" fill="#9a9a9a"/><path d="M6 3h5M6 5h5" stroke="#5a5a5a" stroke-width=".8"/><rect x="1" y="8" width="15" height="8" fill="#7a52b5"/></svg>
<div class="a ui" style="left:890px;top:38.7px;font-size:12.8px;color:#6f98c2;">web.php</div>
<svg class="a" style="left:947px;top:39px" width="9" height="9" viewBox="0 0 9 9"><path d="M1 1l7 7M8 1L1 8" stroke="#4e5053" stroke-width="1.2"/></svg>
<svg class="a" style="left:971px;top:36px" width="17" height="17" viewBox="0 0 17 17"><rect x="5" y="1" width="7" height="7" fill="#9a9a9a"/><path d="M6 3h5M6 5h5" stroke="#5a5a5a" stroke-width=".8"/><rect x="1" y="8" width="15" height="8" fill="#d9a42a"/></svg>
<div class="a ui" style="left:992px;top:38.7px;font-size:12.8px;color:#6f98c2;">app.js</div>
<svg class="a" style="left:1034px;top:39px" width="9" height="9" viewBox="0 0 9 9"><path d="M1 1l7 7M8 1L1 8" stroke="#4e5053" stroke-width="1.2"/></svg>
<svg class="a" style="left:1059px;top:37px" width="15" height="15" viewBox="0 0 16 16"><circle cx="8" cy="8" r="7.6" fill="#2199bb"/><circle cx="8" cy="8" r="4.6" fill="#1b86a8"/><path d="M10.2 6.3A2.6 2.6 0 1 0 10.2 9.7" stroke="#4fb6d3" stroke-width="1.1" fill="none"/></svg>
<div class="a ui" style="left:1079.5px;top:38.7px;font-size:12.45px;color:#6f98c2;">indexController.php</div>
<svg class="a" style="left:1195px;top:39px" width="9" height="9" viewBox="0 0 9 9"><path d="M1 1l7 7M8 1L1 8" stroke="#4e5053" stroke-width="1.2"/></svg>
<svg class="a" style="left:1219px;top:36px" width="17" height="17" viewBox="0 0 17 17"><rect x="5" y="1" width="7" height="7" fill="#9a9a9a"/><path d="M6 3h5M6 5h5" stroke="#5a5a5a" stroke-width=".8"/><rect x="1" y="8" width="15" height="8" fill="#e44d26"/></svg>
<div class="a ui" style="left:1240.5px;top:38.7px;font-size:12.7px;color:#d75a5a;">detail.blade.php</div>
<svg class="a" style="left:1338px;top:39px" width="9" height="9" viewBox="0 0 9 9"><path d="M1 1l7 7M8 1L1 8" stroke="#4e5053" stroke-width="1.2"/></svg>
<div class="a code" style="left:354px;top:62.50px;width:28px;text-align:right;font-style:italic;color:#505255;font-weight:normal;transform:scaleY(1.18);transform-origin:50% 55%">31</div>
<div class="a code" style="left:354px;top:81.60px;width:28px;text-align:right;font-style:italic;color:#505255;font-weight:normal;transform:scaleY(1.18);transform-origin:50% 55%">32</div>
<div class="a code" style="left:354px;top:100.70px;width:28px;text-align:right;font-style:italic;color:#505255;font-weight:normal;transform:scaleY(1.18);transform-origin:50% 55%">33</div>
<div class="a code" style="left:354px;top:119.80px;width:28px;text-align:right;font-style:italic;color:#505255;font-weight:normal;transform:scaleY(1.18);transform-origin:50% 55%">34</div>
<div class="a code" style="left:354px;top:138.90px;width:28px;text-align:right;font-style:italic;color:#505255;font-weight:normal;transform:scaleY(1.18);transform-origin:50% 55%">35</div>
<div class="a code" style="left:354px;top:158.00px;width:28px;text-align:right;font-style:italic;color:#505255;font-weight:normal;transform:scaleY(1.18);transform-origin:50% 55%">36</div>
<div class="a code" style="left:354px;top:177.10px;width:28px;text-align:right;font-style:italic;color:#505255;font-weight:normal;transform:scaleY(1.18);transform-origin:50% 55%">37</div>
<div class="a code" style="left:354px;top:196.20px;width:28px;text-align:right;font-style:italic;color:#505255;font-weight:normal;transform:scaleY(1.18);transform-origin:50% 55%">38</div>
<div class="a code" style="left:354px;top:215.30px;width:28px;text-align:right;font-style:italic;color:#505255;font-weight:normal;transform:scaleY(1.18);transform-origin:50% 55%">39</div>
<div class="a code" style="left:354px;top:234.40px;width:28px;text-align:right;font-style:italic;color:#c8c8c8;font-weight:bold;transform:scaleY(1.18);transform-origin:50% 55%">40</div>
<div class="a code" style="left:354px;top:253.50px;width:28px;text-align:right;font-style:italic;color:#505255;font-weight:normal;transform:scaleY(1.18);transform-origin:50% 55%">41</div>
<div class="a code" style="left:354px;top:272.60px;width:28px;text-align:right;font-style:italic;color:#505255;font-weight:normal;transform:scaleY(1.18);transform-origin:50% 55%">42</div>
<div class="a code" style="left:354px;top:291.70px;width:28px;text-align:right;font-style:italic;color:#505255;font-weight:normal;transform:scaleY(1.18);transform-origin:50% 55%">43</div>
<div class="a code" style="left:354px;top:310.80px;width:28px;text-align:right;font-style:italic;color:#505255;font-weight:normal;transform:scaleY(1.18);transform-origin:50% 55%">44</div>
<div class="a code" style="left:354px;top:329.90px;width:28px;text-align:right;font-style:italic;color:#505255;font-weight:normal;transform:scaleY(1.18);transform-origin:50% 55%">45</div>
<div class="a code" style="left:354px;top:349.00px;width:28px;text-align:right;font-style:italic;color:#505255;font-weight:normal;transform:scaleY(1.18);transform-origin:50% 55%">46</div>
<div class="a code" style="left:354px;top:368.10px;width:28px;text-align:right;font-style:italic;color:#505255;font-weight:normal;transform:scaleY(1.18);transform-origin:50% 55%">47</div>
<div class="a code" style="left:354px;top:387.20px;width:28px;text-align:right;font-style:italic;color:#505255;font-weight:normal;transform:scaleY(1.18);transform-origin:50% 55%">48</div>
<div class="a code" style="left:354px;top:406.30px;width:28px;text-align:right;font-style:italic;color:#505255;font-weight:normal;transform:scaleY(1.18);transform-origin:50% 55%">49</div>
<div class="a code" style="left:354px;top:425.40px;width:28px;text-align:right;font-style:italic;color:#505255;font-weight:normal;transform:scaleY(1.18);transform-origin:50% 55%">50</div>
<div class="a code" style="left:354px;top:444.50px;width:28px;text-align:right;font-style:italic;color:#505255;font-weight:normal;transform:scaleY(1.18);transform-origin:50% 55%">51</div>
<div class="a code" style="left:354px;top:463.60px;width:28px;text-align:right;font-style:italic;color:#505255;font-weight:normal;transform:scaleY(1.18);transform-origin:50% 55%">52</div>
<div class="a code" style="left:354px;top:482.70px;width:28px;text-align:right;font-style:italic;color:#505255;font-weight:normal;transform:scaleY(1.18);transform-origin:50% 55%">53</div>
<div class="a code" style="left:354px;top:501.80px;width:28px;text-align:right;font-style:italic;color:#505255;font-weight:normal;transform:scaleY(1.18);transform-origin:50% 55%">54</div>
<div class="a code" style="left:354px;top:520.90px;width:28px;text-align:right;font-style:italic;color:#505255;font-weight:normal;transform:scaleY(1.18);transform-origin:50% 55%">55</div>
<div class="a code" style="left:354px;top:540.00px;width:28px;text-align:right;font-style:italic;color:#505255;font-weight:normal;transform:scaleY(1.18);transform-origin:50% 55%">56</div>
<div class="a code" style="left:354px;top:559.10px;width:28px;text-align:right;font-style:italic;color:#505255;font-weight:normal;transform:scaleY(1.18);transform-origin:50% 55%">57</div>
<div class="a code" style="left:354px;top:578.20px;width:28px;text-align:right;font-style:italic;color:#505255;font-weight:normal;transform:scaleY(1.18);transform-origin:50% 55%">58</div>
<div class="a code" style="left:354px;top:597.30px;width:28px;text-align:right;font-style:italic;color:#505255;font-weight:normal;transform:scaleY(1.18);transform-origin:50% 55%">59</div>
<div class="a code" style="left:354px;top:616.40px;width:28px;text-align:right;font-style:italic;color:#505255;font-weight:normal;transform:scaleY(1.18);transform-origin:50% 55%">60</div>
<div class="a code" style="left:354px;top:635.50px;width:28px;text-align:right;font-style:italic;color:#505255;font-weight:normal;transform:scaleY(1.18);transform-origin:50% 55%">61</div>
<div class="a" style="left:420px;top:58px;width:1px;height:592px;background:#3c3e41"></div>
<svg class="a" style="left:415.5px;top:103.7px" width="10" height="11" viewBox="0 0 10 11"><path d="M1 4.5L5 1 9 4.5V10H1z" fill="#2a2b2e" stroke="#5a5c5f" stroke-width="1"/><path d="M3 5.5h4" stroke="#5a5c5f" stroke-width=".8"/></svg>
<svg class="a" style="left:415.5px;top:141.9px" width="10" height="11" viewBox="0 0 10 11"><path d="M1 1h8v5.5L5 10 1 6.5z" fill="#2a2b2e" stroke="#5a5c5f" stroke-width="1"/><path d="M3 5.5h4" stroke="#5a5c5f" stroke-width=".8"/></svg>
<svg class="a" style="left:415.5px;top:218.3px" width="10" height="11" viewBox="0 0 10 11"><path d="M1 4.5L5 1 9 4.5V10H1z" fill="#2a2b2e" stroke="#5a5c5f" stroke-width="1"/><path d="M3 5.5h4" stroke="#5a5c5f" stroke-width=".8"/></svg>
<svg class="a" style="left:415.5px;top:237.4px" width="10" height="11" viewBox="0 0 10 11"><path d="M1 1h8v5.5L5 10 1 6.5z" fill="#2a2b2e" stroke="#5a5c5f" stroke-width="1"/><path d="M3 5.5h4" stroke="#5a5c5f" stroke-width=".8"/></svg>
<svg class="a" style="left:415.5px;top:428.4px" width="10" height="11" viewBox="0 0 10 11"><path d="M1 1h8v5.5L5 10 1 6.5z" fill="#2a2b2e" stroke="#5a5c5f" stroke-width="1"/><path d="M3 5.5h4" stroke="#5a5c5f" stroke-width=".8"/></svg>
<svg class="a" style="left:415.5px;top:466.6px" width="10" height="11" viewBox="0 0 10 11"><path d="M1 1h8v5.5L5 10 1 6.5z" fill="#2a2b2e" stroke="#5a5c5f" stroke-width="1"/><path d="M3 5.5h4" stroke="#5a5c5f" stroke-width=".8"/></svg>
<svg class="a" style="left:415.5px;top:485.7px" width="10" height="11" viewBox="0 0 10 11"><path d="M1 1h8v5.5L5 10 1 6.5z" fill="#2a2b2e" stroke="#5a5c5f" stroke-width="1"/><path d="M3 5.5h4" stroke="#5a5c5f" stroke-width=".8"/></svg>
<svg class="a" style="left:415.5px;top:581.2px" width="10" height="11" viewBox="0 0 10 11"><path d="M1 4.5L5 1 9 4.5V10H1z" fill="#2a2b2e" stroke="#5a5c5f" stroke-width="1"/><path d="M3 5.5h4" stroke="#5a5c5f" stroke-width=".8"/></svg>
<svg class="a" style="left:415.5px;top:600.3px" width="10" height="11" viewBox="0 0 10 11"><path d="M1 1h8v5.5L5 10 1 6.5z" fill="#2a2b2e" stroke="#5a5c5f" stroke-width="1"/><path d="M3 5.5h4" stroke="#5a5c5f" stroke-width=".8"/></svg>
<svg class="a" style="left:415.5px;top:619.4px" width="10" height="11" viewBox="0 0 10 11"><path d="M1 1h8v5.5L5 10 1 6.5z" fill="#2a2b2e" stroke="#5a5c5f" stroke-width="1"/><path d="M3 5.5h4" stroke="#5a5c5f" stroke-width=".8"/></svg>
<div class="a" style="left:421px;top:231.40px;width:959px;height:19px;background:#2d2e30"></div>
<div class="a" style="left:1316px;top:58px;width:1px;height:592px;background:#35373a"></div>
<svg class="a" style="left:433px;top:214px" width="14" height="16" viewBox="0 0 14 16"><circle cx="7" cy="6" r="5.5" fill="#f2b01e"/><rect x="4.5" y="10" width="5" height="4" rx="1" fill="#c98f14"/></svg>
<div class="a" style="left:458px;top:80.6px;width:1px;height:19.1px;background:#323337"></div>
<div class="a" style="left:458px;top:271.6px;width:1px;height:382.0px;background:#323337"></div>
<div class="a" style="left:488px;top:348.0px;width:1px;height:57.3px;background:#323337"></div>
<div class="a" style="left:488px;top:462.6px;width:1px;height:191.0px;background:#323337"></div>
<div class="a" style="left:517px;top:481.7px;width:1px;height:171.9px;background:#323337"></div>
<div class="a" style="left:547px;top:615.4px;width:1px;height:38.2px;background:#323337"></div>
<div class="a" style="left:577px;top:634.5px;width:1px;height:19.1px;background:#323337"></div>
<div class="a" style="left:421px;top:58px;width:959px;height:592px;overflow:hidden">
<div class="a code" style="left:4.20px;top:3.50px"><span class="t">    {</span></div>
<div class="a code" style="left:4.20px;top:22.60px"><span class="t">        </span><span class="k">parent</span><span class="t">::</span><span class="fn">__construct</span><span class="t">()</span><span class="k">;</span></div>
<div class="a code" style="left:4.20px;top:41.70px"><span class="t">    }</span></div>
<div class="a code" style="left:4.20px;top:79.90px"><span class="c">    /**</span></div>
<div class="a code" style="left:4.20px;top:99.00px"><span class="c">     * Execute the console command.</span></div>
<div class="a code" style="left:4.20px;top:118.10px"><span class="c">     *</span></div>
<div class="a code" style="left:4.20px;top:137.20px"><span class="c">     * </span><span class="c" style="text-decoration:underline;font-weight:bold">@return</span><span class="c"> mixed</span></div>
<div class="a code" style="left:4.20px;top:156.30px"><span class="c">     */</span></div>
<div class="a code" style="left:4.20px;top:175.40px"><span class="t">    </span><span class="k">public function </span><span class="fn">handle</span><span style="background:#3b514d;color:#e8e26b">()</span><span style="display:inline-block;width:2px;height:15px;background:#d8d8d8;vertical-align:-3px"></span></div>
<div class="a code" style="left:4.20px;top:194.50px"><span class="t">    {</span></div>
<div class="a code" style="left:4.20px;top:213.60px"><span class="t">        </span><span class="v">$date</span><span class="t"> = date(</span><span class="hint" style="margin-left:2.3px;margin-right:4.5px;width:48px;padding-left:5.5px">format:</span><span class="s">&quot;Y-m-d&quot;</span><span class="t">)</span><span class="k">;</span></div>
<div class="a code" style="left:4.20px;top:232.70px"><span class="t">        </span><span class="v">$nextDate</span><span class="t"> = date(</span><span class="hint" style="margin-left:2.3px;margin-right:4.5px;width:48px;padding-left:5.5px">format:</span><span class="s">&quot;Y-m-d&quot;</span><span class="k">,</span><span class="t">strtotime(</span><span class="hint" style="margin-left:3.7px;margin-right:2.4px;width:36.3px;padding-left:4.5px">time:</span><span class="s">&quot;+1 Day&quot;</span><span class="k">,</span><span class="t">time()))</span><span class="k">;</span></div>
<div class="a code" style="left:4.20px;top:270.90px"><span class="t">        </span><span class="v">$list</span><span class="t"> = Appointment::</span><span class="fn" style="background:#45402a">whereIn</span><span class="t">(</span><span class="s">&#x27;date&#x27;</span><span class="k">,</span><span class="t">[</span><span class="v">$date</span><span class="k">,</span><span class="v">$nextDate</span><span class="t">])</span></div>
<div class="a code" style="left:4.20px;top:290.00px"><span class="t">            -&gt;</span><span class="fn">where</span><span class="t">(</span><span class="s">&#x27;isActive&#x27;</span><span class="k">,</span><span class="cn">APPOINTMENT_SUCCESS</span><span class="t">)</span></div>
<div class="a code" style="left:4.20px;top:309.10px"><span class="t">            -&gt;</span><span class="fn">where</span><span class="t">(</span><span class="s">&#x27;isSend&#x27;</span><span class="k">,</span><span class="cn">REMINDER_DEFAULT</span><span class="t">)</span></div>
<div class="a code" style="left:4.20px;top:328.20px"><span class="t">            -&gt;</span><span class="fn">get</span><span class="t">()</span><span class="k">;</span></div>
<div class="a code" style="left:4.20px;top:366.40px"><span class="t">        </span><span class="k">foreach</span><span class="t"> (</span><span class="v">$list</span><span class="k"> as </span><span class="v">$k</span><span class="t"> =&gt; </span><span class="v">$v</span><span class="t">)</span></div>
<div class="a code" style="left:4.20px;top:385.50px"><span class="t">        {</span></div>
<div class="a code" style="left:4.20px;top:404.60px"><span class="t">            </span><span class="k">if</span><span class="t">(</span><span class="v">$v</span><span class="t">[</span><span class="s">&#x27;notification_type&#x27;</span><span class="t">] == </span><span class="cn">NOTIFICATION_EMAIL</span><span class="t">) {</span></div>
<div class="a code" style="left:4.20px;top:423.70px"><span class="t">                </span><span class="v">$data</span><span class="t">  = [</span></div>
<div class="a code" style="left:4.20px;top:442.80px"><span class="t">                  </span><span class="s">&#x27;name&#x27;</span><span class="t">=&gt;</span><span class="v">$v</span><span class="t">[</span><span class="s">&#x27;fullName&#x27;</span><span class="t">]</span><span class="k">,</span></div>
<div class="a code" style="left:4.20px;top:461.90px"><span class="t">                  </span><span class="s">&#x27;email&#x27;</span><span class="t">=&gt;</span><span class="v">$v</span><span class="t">[</span><span class="s">&#x27;email&#x27;</span><span class="t">]</span><span class="k">,</span></div>
<div class="a code" style="left:4.20px;top:481.00px"><span class="t">                  </span><span class="s">&#x27;date&#x27;</span><span class="t">=&gt;</span><span class="v">$v</span><span class="t">[</span><span class="s">&#x27;date&#x27;</span><span class="t">]</span><span class="k">,</span></div>
<div class="a code" style="left:4.20px;top:500.10px"><span class="t">                  </span><span class="s">&#x27;time&#x27;</span><span class="t">=&gt;WorkingHours::</span><span class="fn">getString</span><span class="t">(</span><span class="v">$v</span><span class="t">[</span><span class="s">&#x27;workingHour&#x27;</span><span class="t">])</span></div>
<div class="a code" style="left:4.20px;top:519.20px"><span class="t">                ];</span></div>
<div class="a code" style="left:4.20px;top:538.30px"><span class="t">                </span><span class="k">try</span><span class="t"> {</span></div>
<div class="a code" style="left:4.20px;top:557.40px"><span class="t">                    </span><span class="t" style="background:#3e3f33">Mail</span><span class="t">::</span><span class="fn">send</span><span class="t">(</span><span class="s">&#x27;email&#x27;</span><span class="k">, </span><span class="v">$data</span><span class="k">, function </span><span class="t">(</span><span class="v">$message</span><span class="t">) </span><span class="k">use </span><span class="t">(</span><span class="v">$data</span><span class="t">) {</span></div>
<div class="a code" style="left:4.20px;top:576.50px"><span class="t">                        </span><span class="v">$message</span><span class="t">-&gt;</span><span class="fn" style="background:#45402a">to</span><span class="t">(</span><span class="v">$data</span><span class="t">[</span><span class="s">&#x27;email&#x27;</span><span class="t">]</span><span class="k">, </span><span class="v">$data</span><span class="t">[</span><span class="s">&#x27;name&#x27;</span><span class="t">])-&gt;</span><span class="fn">subject</span><span class="t">(</span><span class="s">&#x27;Randevu Hatırlatma&#x27;</span><span class="t">)</span><span class="k">;</span></div>
</div>
<div class="a" style="left:428px;top:640px;width:632px;height:9px;border-radius:4.5px;background:rgba(120,122,125,.5)"></div>
<div class="a" style="left:1367px;top:61px;width:11px;height:11px;background:#d39e1c"></div>
<div class="a" style="left:1365px;top:104px;width:15px;height:2px;background:#c49a24"></div>
<div class="a" style="left:1365px;top:255px;width:15px;height:2px;background:#c49a24"></div>
<div class="a" style="left:1365px;top:315px;width:15px;height:2px;background:#c49a24"></div>
<div class="a" style="left:1365px;top:320px;width:15px;height:2px;background:#c49a24"></div>
<div class="a" style="left:1365px;top:324px;width:15px;height:2px;background:#c49a24"></div>
<div class="a" style="left:1365px;top:332px;width:15px;height:2px;background:#c49a24"></div>
<div class="a" style="left:1365px;top:340px;width:15px;height:2px;background:#c49a24"></div>
<div class="a" style="left:1365px;top:348px;width:15px;height:2px;background:#c49a24"></div>
<div class="a" style="left:1365px;top:467px;width:15px;height:2px;background:#c49a24"></div>
<div class="a" style="left:1365px;top:479px;width:15px;height:2px;background:#c49a24"></div>
<div class="a" style="left:1365px;top:495px;width:15px;height:2px;background:#c49a24"></div>
<div class="a" style="left:1365px;top:512px;width:15px;height:2px;background:#c49a24"></div>
<div class="a" style="left:1365px;top:536px;width:15px;height:2px;background:#c49a24"></div>
<div class="a" style="left:1365px;top:552px;width:15px;height:2px;background:#c49a24"></div>
<div class="a" style="left:1365px;top:556px;width:15px;height:2px;background:#c49a24"></div>
<div class="a" style="left:1365px;top:560px;width:15px;height:2px;background:#c49a24"></div>
<div class="a" style="left:1365px;top:565px;width:15px;height:2px;background:#c49a24"></div>
<div class="a" style="left:1365px;top:576px;width:15px;height:2px;background:#c49a24"></div>
<div class="a" style="left:1365px;top:580px;width:15px;height:2px;background:#c49a24"></div>
<div class="a" style="left:1365px;top:585px;width:15px;height:2px;background:#c49a24"></div>
<div class="a" style="left:1365px;top:589px;width:15px;height:2px;background:#c49a24"></div>
<div class="a" style="left:1365px;top:593px;width:15px;height:2px;background:#c49a24"></div>
<div class="a" style="left:1365px;top:600px;width:15px;height:2px;background:#c49a24"></div>
<div class="a" style="left:1365px;top:475px;width:15px;height:2px;background:#8a8060"></div>
<div class="a" style="left:1370px;top:200px;width:7px;height:121px;border-radius:4px;background:rgba(110,112,115,.55)"></div>
<div class="a" style="left:1221px;top:80px;width:118px;height:31px;border-radius:3px;background:rgba(70,71,74,.45)"></div>
<svg class="a" style="left:1232px;top:88px" width="15" height="15" viewBox="0 0 16 16"><circle cx="8" cy="8" r="7.5" fill="#dd4b39"/><path d="M8 8L1.2 4.3A7.5 7.5 0 0 0 4.3 14.5z" fill="#1da462"/><path d="M8 8L4.3 14.5A7.5 7.5 0 0 0 15.5 8z" fill="#ffcd46"/><circle cx="8" cy="8" r="3.6" fill="#fff"/><circle cx="8" cy="8" r="2.7" fill="#4c8bf5"/></svg>
<svg class="a" style="left:1260px;top:88px" width="15" height="15" viewBox="0 0 16 16"><circle cx="8" cy="8" r="7.5" fill="#e8352b"/><path d="M8 0.5A7.5 7.5 0 0 1 15.5 8 7.5 7.5 0 0 1 10 15z" fill="#f7c52b"/><circle cx="7.5" cy="8" r="3.3" fill="#3a3d8f"/></svg>
<svg class="a" style="left:1287px;top:88px" width="15" height="15" viewBox="0 0 16 16"><circle cx="8" cy="8" r="7.5" fill="#4aa3e8"/><circle cx="8" cy="8" r="6" fill="none" stroke="#cfe6f8" stroke-width=".8"/><path d="M11 5L7 7.5 5 11 9 8.5z" fill="#e8f3fb"/></svg>
<svg class="a" style="left:1314px;top:88px" width="15" height="15" viewBox="0 0 16 16"><ellipse cx="8" cy="8" rx="7" ry="7.5" fill="#d0112b"/><ellipse cx="8" cy="8" rx="2.6" ry="4.8" fill="#5a0d18"/></svg>
<div class="a ui" style="left:430.5px;top:655.5px;font-size:13.3px;color:#bbbbbb;">\App\Console\Commands</div>
<svg class="a" style="left:594px;top:658px" width="5" height="10" viewBox="0 0 5 10"><path d="M0.5 0.5L4.5 5 0.5 9.5" stroke="#55575a" fill="none"/></svg>
<div class="a ui" style="left:608px;top:656px;font-size:13.2px;color:#bbbbbb;">ReminderTask</div>
<svg class="a" style="left:705px;top:658px" width="5" height="10" viewBox="0 0 5 10"><path d="M0.5 0.5L4.5 5 0.5 9.5" stroke="#55575a" fill="none"/></svg>
<div class="a ui" style="left:719px;top:656px;font-size:13.4px;color:#bbbbbb;">handle()</div>
<svg class="a" style="left:49px;top:680px" width="13" height="11" viewBox="0 0 13 11"><path d="M0 1h2M0 4h2M0 7h2M0 10h2M4 1h9M4 4h9M4 7h9M4 10h9" stroke="#a8a8a8" stroke-width="1.4"/></svg>
<div class="a ui" style="left:66px;top:680px;font-size:12px;color:#a8a8a8;"><u>6</u>: TODO</div>
<svg class="a" style="left:138px;top:679px" width="12" height="14" viewBox="0 0 12 14"><path d="M2 0v14M2 9c0-4 3-5 7-5" stroke="#a8a8a8" stroke-width="1.6" fill="none"/><path d="M7 1.5l3 2.5-3 2.5" stroke="#a8a8a8" stroke-width="1.5" fill="none"/></svg>
<div class="a ui" style="left:155px;top:680px;font-size:12px;color:#a8a8a8;"><u>9</u>: Version Control</div>
<svg class="a" style="left:277px;top:680px" width="12" height="12" viewBox="0 0 12 12"><rect width="12" height="12" fill="#a8a8a8"/><path d="M2.5 3l3 2.5-3 2.5" stroke="#3b3d40" stroke-width="1.4" fill="none"/></svg>
<div class="a ui" style="left:295px;top:680px;font-size:12.1px;color:#a8a8a8;">Terminal</div>
<svg class="a" style="left:1297px;top:678px" width="15" height="15" viewBox="0 0 15 15"><path d="M7.5 1a6.5 6.5 0 1 0 0 13H14V7.5A6.5 6.5 0 0 0 7.5 1z" fill="none" stroke="#a8a8a8" stroke-width="1.4"/></svg>
<div class="a ui" style="left:1315.5px;top:680px;font-size:12px;color:#a8a8a8;">Event Log</div>
<div class="a ui" style="left:1047px;top:702px;font-size:12.8px;color:#a8a8a8;">40:29</div>
<div class="a ui" style="left:1092px;top:702px;font-size:12.4px;color:#a8a8a8;">LF</div>
<div class="a ui" style="left:1117px;top:702px;font-size:12.4px;color:#a8a8a8;">UTF-8</div>
<div class="a ui" style="left:1165px;top:702px;font-size:12.4px;color:#a8a8a8;">EditorConfig</div>
<div class="a ui" style="left:1250px;top:702px;font-size:12.3px;color:#a8a8a8;">Git: master</div>
<svg class="a" style="left:1325px;top:700px" width="13" height="14" viewBox="0 0 13 14"><path d="M1.5 6V3.5a2.5 2.5 0 0 1 5 0" stroke="#a8a8a8" stroke-width="1.5" fill="none"/><rect x="4" y="7" width="9" height="7" fill="#a8a8a8"/></svg>
<svg class="a" style="left:1352px;top:700px" width="13" height="15" viewBox="0 0 13 15"><path d="M3 1h7l1 4H2z" fill="#a8a8a8"/><rect x="0" y="5.5" width="13" height="1.5" fill="#a8a8a8"/><circle cx="6.5" cy="10" r="3.6" fill="none" stroke="#a8a8a8" stroke-width="1.4"/><rect x="1" y="13" width="11" height="2" fill="#a8a8a8"/></svg>
<svg class="a" style="left:1377px;top:700px" width="15" height="16" viewBox="0 0 15 16"><g transform="translate(0,0) scale(0.46)"><path d="M10 1h4l.6 3.1 2.3 1 2.6-1.8 2.8 2.8-1.8 2.6 1 2.3L23 10v4l-3.1.6-1 2.3 1.8 2.6-2.8 2.8-2.6-1.8-2.3 1L14 23h-4l-.6-3.1-2.3-1-2.6 1.8-2.8-2.8 1.8-2.6-1-2.3L1 14v-4l3.1-.6 1-2.3L3.3 4.5l2.8-2.8 2.6 1.8 2.3-1z" fill="#a8a8a8"/><circle cx="12" cy="12" r="4.5" fill="#393a3d"/></g><rect x="7" y="7" width="8" height="9" fill="#393a3d"/><path d="M8.6 9.6a2.1 2.1 0 1 1 3 1.9c-.6.3-.9.7-.9 1.4" stroke="#a8a8a8" stroke-width="1.3" fill="none"/><circle cx="10.7" cy="15" r=".8" fill="#a8a8a8"/></svg>
<svg class="a" style="left:687px;top:289px" width="10" height="19" viewBox="0 0 10 19"><path d="M1 1h3l1 1 1-1h3M5 2v15M1 18h3l1-1 1 1h3" stroke="#111" stroke-width="2.6" fill="none"/><path d="M1 1h3l1 1 1-1h3M5 2v15M1 18h3l1-1 1 1h3" stroke="#e8e8e8" stroke-width="1.2" fill="none"/></svg>
<div class="a" style="left:1063px;top:648px;width:74px;height:1px;background:repeating-linear-gradient(90deg,#5d8a4f 0 2px,transparent 2px 3px)"></div>
</body></html>
